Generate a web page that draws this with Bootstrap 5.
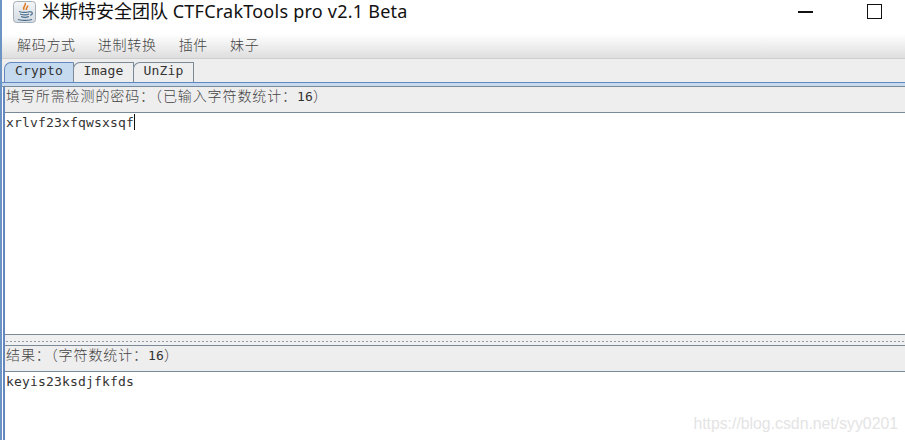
<!DOCTYPE html>
<html lang="zh">
<head>
    <meta charset="UTF-8">
    <title>CTFCrakTools</title>
    <link href="https://cdn.jsdelivr.net/npm/bootstrap@5.3.0/dist/css/bootstrap.min.css" rel="stylesheet">
    <style>
        html, body { height: 100%; overflow: hidden; background: #fff; }
        .app-shell { height: 440px; border-left: 2px solid #6b93c4; font-family: "DejaVu Sans Mono", "Noto Sans CJK SC", monospace; font-size: 13px; letter-spacing: .17px; color: #333; }
        .cn { font-family: "Noto Sans CJK SC", sans-serif; font-size: 14px; letter-spacing: 0; font-weight: 300; color: #444; }
        .cn-wide { letter-spacing: .9px; }
        .title-bar { height: 34px; padding: 0 23px 11px 11px; font-family: "Noto Sans", "Noto Sans CJK SC", sans-serif; font-size: 18px; letter-spacing: 0; color: #111; }
        .title-en { letter-spacing: .24px; }
        .java-icon { width: 23px; height: 22px; margin-right: 6px; }
        .win-min { width: 15px; height: 2px; background: #111; margin-right: 54px; }
        .win-max { width: 15px; height: 15px; border: 1px solid #111; }
        .menu-strip { height: 25px; padding: 0 0 3px 15px; gap: 22px; background: linear-gradient(#fff, #dedede); border-bottom: 1px solid #cfcfcf; letter-spacing: .7px; }
        .tab-strip { height: 24px; background: #eee; padding: 3px 0 0 2px; border-bottom: 1px solid #6388c0; }
        .tab-item { height: 20px; border: 1px solid #7a8a99; border-bottom: 0; border-top-left-radius: 7px; line-height: 16px; text-align: center; background: #eee; }
        .tab-on { width: 70px; background: #c5d9ef; border-color: #6388c0; border-right-color: #7a8a99; }
        .tab-off { width: 61px; margin-left: -1px; }
        .tab-gap { height: 4px; background: #c5d9ef; border-bottom: 1px solid #7a8a99; }
        .pane-wrap { border-left: 2px solid #6388c0; margin-left: 1px; height: 354px; }
        .pane-head { height: 26px; background: #eee; border-bottom: 1px solid #7a8a99; padding-left: 1px; line-height: 16px; }
        .pane-top { height: 222px; background: #fff; border-bottom: 1px solid #7a8a99; padding-left: 1px; }
        .pane-bottom { padding-left: 1px; }
        .caret-bar { display: inline-block; width: 1px; height: 16px; background: #111; vertical-align: -3px; }
        .split-grip { height: 11px; background-color: #f0f0f0; background-image: radial-gradient(#8f9cab .6px, transparent .9px); background-size: 4px 3px; background-position: 0 5px; background-repeat: repeat-x; border-bottom: 1px solid #7a8a99; }
        .watermark { right: 7px; bottom: 4px; font-family: "Liberation Sans", sans-serif; font-size: 15.8px; letter-spacing: 0; color: #e4e4e4; }
    </style>
</head>
<body>
    <div class="app-shell position-relative">
        <div class="title-bar d-flex align-items-center">
            <svg class="java-icon" viewBox="0 0 23 22">
                <defs>
                    <linearGradient id="iconBg" x1="0" y1="0" x2="0" y2="1">
                        <stop offset="0" stop-color="#f4f6f8"/>
                        <stop offset="1" stop-color="#d3dae1"/>
                    </linearGradient>
                </defs>
                <rect x=".5" y=".5" width="22" height="21" rx="3" fill="url(#iconBg)" stroke="#a5afb9"/>
                <path d="M12 2c2 2-3 3.500-1 7M14.500 4.500c1 1.500-2 2-1 4.500" fill="none" stroke="#e0761c" stroke-width="1.500"/>
                <path d="M6 10.500c3 1 8 1 11 0M7 13c3 1 7 1 9 0M8 15.500c2 .8 6 .8 8 0M5 18.500c4 1 10 1 14 0M17 11c3-1 3 3 0 3" fill="none" stroke="#4a6d8c" stroke-width="1.200"/>
            </svg>
            <span>米斯特安全团队 <span class="title-en">CTFCrakTools pro v2.1 Beta</span></span>
            <div class="ms-auto d-flex align-items-center">
                <div class="win-min"></div>
                <div class="win-max"></div>
            </div>
        </div>
        <div class="menu-strip d-flex align-items-center cn">
            <span>解码方式</span><span>进制转换</span><span>插件</span><span>妹子</span>
        </div>
        <div class="tab-strip d-flex">
            <div class="tab-item tab-on">Crypto</div>
            <div class="tab-item tab-off">Image</div>
            <div class="tab-item tab-off">UnZip</div>
        </div>
        <div class="tab-gap"></div>
        <div class="pane-wrap">
            <div class="pane-head"><span class="cn cn-wide">填写所需检测的密码&#xFF1A;&#xFF08;已输入字符数统计&#xFF1A;</span>16<span class="cn">&#xFF09;</span></div>
            <div class="pane-top">xrlvf23xfqwsxsqf<span class="caret-bar"></span></div>
            <div class="split-grip"></div>
            <div class="pane-head"><span class="cn cn-wide">结果&#xFF1A;&#xFF08;字符数统计&#xFF1A;</span>16<span class="cn">&#xFF09;</span></div>
            <div class="pane-bottom">keyis23ksdjfkfds</div>
        </div>
        <div class="watermark position-absolute">https://blog.csdn.net/syy0201</div>
    </div>
    <script src="https://cdn.jsdelivr.net/npm/bootstrap@5.3.0/dist/js/bootstrap.bundle.min.js"></script>
</body>
</html>
